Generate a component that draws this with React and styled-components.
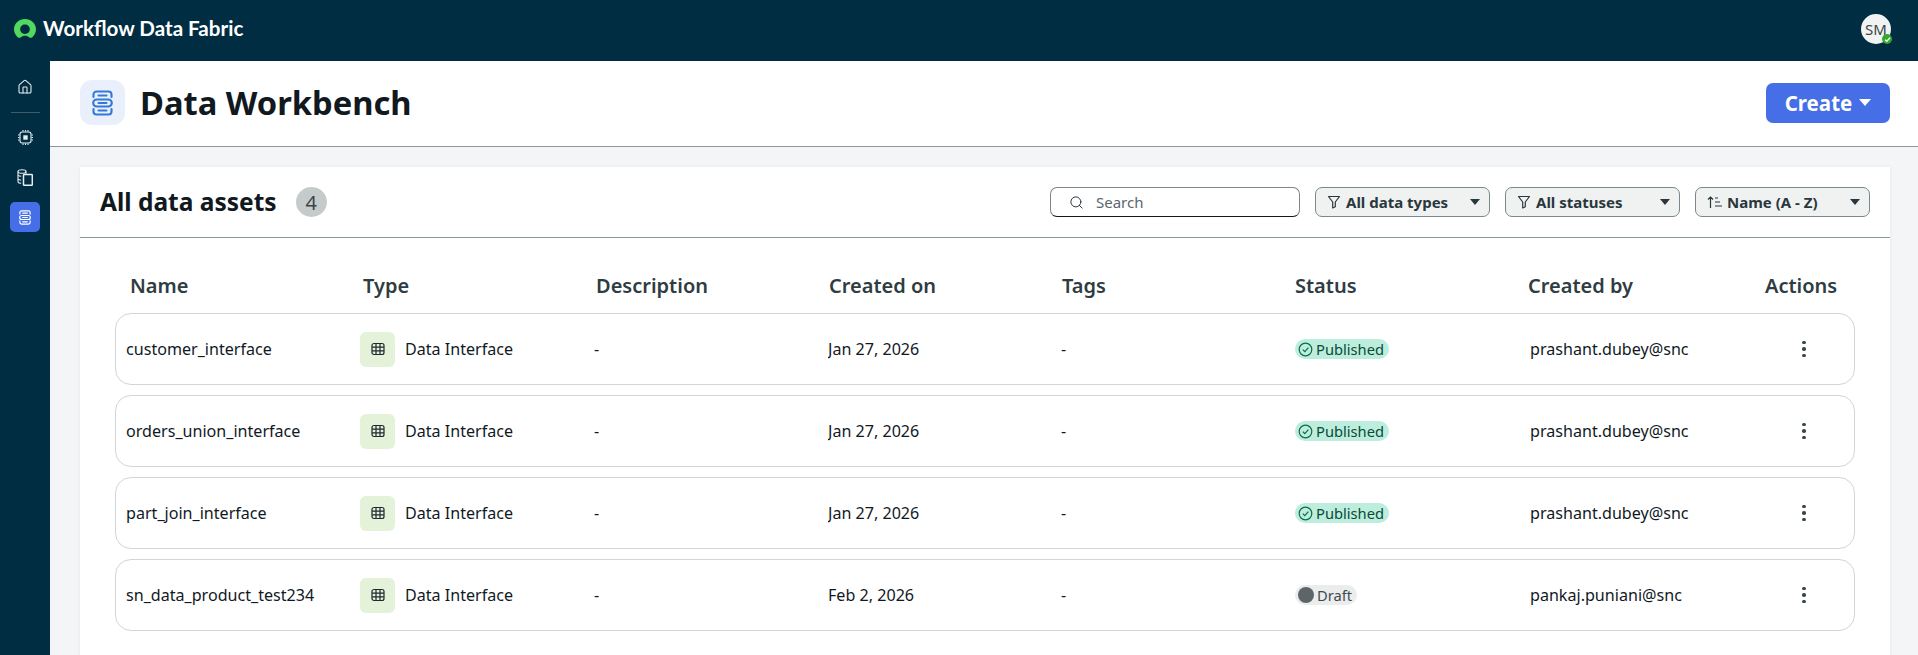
import React from "react";
import styled, { createGlobalStyle } from "styled-components";
import { Search as SearchIcon, Home } from "lucide-react";

const GlobalStyle = createGlobalStyle`
  html, body { margin: 0; padding: 0; height: 100%; }
  body { font-family: "Noto Sans", "Open Sans", sans-serif; color: #11191f; background: #f4f5f7; }
  * { box-sizing: border-box; }
  #root { height: 100%; }
`;

const rows = [
  { name: "customer_interface", date: "Jan 27, 2026", status: "Published", by: "prashant.dubey@snc" },
  { name: "orders_union_interface", date: "Jan 27, 2026", status: "Published", by: "prashant.dubey@snc" },
  { name: "part_join_interface", date: "Jan 27, 2026", status: "Published", by: "prashant.dubey@snc" },
  { name: "sn_data_product_test234", date: "Feb 2, 2026", status: "Draft", by: "pankaj.puniani@snc" },
];

// two brackets with a bar in each, and a full pill in the middle
function DataIcon({ width = 21, height = 26, color = "#3478d8" }) {
  return (
    <svg width={width} height={height} viewBox="0 0 21 26" fill="none" stroke={color} strokeWidth="2.1" strokeLinecap="round">
      <path d="M1.500 7V4.500A3 3 0 0 1 4.500 1.500h12a3 3 0 0 1 3 3V7" />
      <path d="M6.500 5.500h8" />
      <rect x="1.200" y="9.500" width="18.600" height="7" rx="3.500" />
      <path d="M6.500 13h8" />
      <path d="M1.500 19v2.500a3 3 0 0 0 3 3h12a3 3 0 0 0 3-3V19" />
      <path d="M6.500 20.500h8" />
    </svg>
  );
}

function ChipIcon() {
  return (
    <svg width="15" height="15" viewBox="0 0 15 15" fill="none" stroke="#e8eef2" strokeWidth="1.1">
      <rect x="2" y="2" width="11" height="11" rx="2.200" />
      <rect x="5.300" y="5.300" width="4.400" height="4.400" fill="#e8eef2" stroke="none" />
      <path d="M5 0v1.400M7.500 0v1.400M10 0v1.400M5 13.600V15M7.500 13.600V15M10 13.600V15M0 5h1.400M0 7.500h1.400M0 10h1.400M13.600 5H15M13.600 7.500H15M13.600 10H15" />
    </svg>
  );
}

function FilesIcon() {
  return (
    <svg width="16" height="17" viewBox="0 0 16 17" fill="none" stroke="#e8eef2" strokeWidth="1.1">
      <ellipse cx="5" cy="2.500" rx="4" ry="1.800" />
      <path d="M1 2.500v10.200c0 .9 1.100 1.500 3.200 1.600" />
      <path d="M1 6.300c.6.500 1.700.9 3.200 1M1 10.200c.6.500 1.700.9 3.200 1M9 2.500v2.300" />
      <rect x="6.500" y="5.500" width="8.800" height="10.800" rx="0.800" strokeWidth="1.500" />
      <path d="M10.500 5.500v10.800" strokeOpacity="0" />
    </svg>
  );
}

function TableIcon() {
  return (
    <svg width="14" height="14" viewBox="0 0 14 14" fill="none" stroke="#1e2a2f" strokeWidth="1.2">
      <rect x="1" y="1.500" width="12" height="11" rx="2" />
      <path d="M1 5.200h12M1 8.800h12M5 1.500v11M9 1.500v11" />
    </svg>
  );
}

function FilterIcon() {
  return (
    <svg width="14" height="14" viewBox="0 0 14 14" fill="none" stroke="#2a373d" strokeWidth="1.2" strokeLinejoin="round">
      <path d="M1.500 1.500h11L8.300 7v4.800L5.700 13V7z" />
    </svg>
  );
}

function SortIcon() {
  return (
    <svg width="15" height="14" viewBox="0 0 15 14" fill="none" stroke="#2a373d" strokeWidth="1.2">
      <path d="M3.500 13V2M1 4.500 3.500 2 6 4.500M8 3h3M8 7h5M8 11h7" />
    </svg>
  );
}

function CheckCircle() {
  return (
    <svg width="15" height="15" viewBox="0 0 15 15" fill="none" stroke="#0b6b4c" strokeWidth="1.2">
      <circle cx="7.500" cy="7.500" r="6.300" />
      <path d="M4.800 7.700 6.800 9.700 10.400 5.600" />
    </svg>
  );
}

export default function App() {
  return (
    <>
      <GlobalStyle />
      <Shell>
        <TopBar>
          <Brand>
            <svg width="22" height="20" viewBox="0 0 22 20">
              <path
                fillRule="evenodd"
                fill="#52d95f"
                d="M11 0C5 0 0 4.400 0 10.300c0 3.300 1.600 6 3.600 7.900.9.800 2.100.9 3 .2C7.900 17.400 9.300 16.800 11 16.800s3.100.6 4.400 1.600c.9.7 2.100.6 3-.2 2-1.900 3.600-4.600 3.600-7.900C22 4.400 17 0 11 0zm0 15c-2.800 0-4.800-2.100-4.800-4.700S8.200 5.600 11 5.600s4.800 2.100 4.800 4.700S13.800 15 11 15z"
              />
            </svg>
            <BrandName>Workflow Data Fabric</BrandName>
          </Brand>
          <Avatar>
            SM
            <Presence>
              <svg width="7" height="7" viewBox="0 0 7 7" fill="none" stroke="#fff" strokeWidth="1.3">
                <path d="M1 3.700 2.800 5.300 6 1.800" />
              </svg>
            </Presence>
          </Avatar>
        </TopBar>
        <Body>
          <Sidebar>
            <NavItem><Home size={16} color="#e8eef2" strokeWidth={1.6} /></NavItem>
            <NavDivider />
            <NavItem><ChipIcon /></NavItem>
            <NavItem><FilesIcon /></NavItem>
            <NavItem $active><DataIcon width={12} height={15} color="#fff" /></NavItem>
          </Sidebar>
          <Main>
            <PageHeader>
              <TitleGroup>
                <TitleTile><DataIcon /></TitleTile>
                <Title>Data Workbench</Title>
              </TitleGroup>
              <CreateButton>Create<Caret $color="#fff" $size={6} /></CreateButton>
            </PageHeader>
            <Content>
              <Card>
                <CardHeader>
                  <CardTitleGroup>
                    <CardTitle>All data assets</CardTitle>
                    <Count>4</Count>
                  </CardTitleGroup>
                  <Controls>
                    <SearchBox>
                      <SearchIcon size={15} color="#2a373d" strokeWidth={1.6} />
                      <SearchInput placeholder="Search" />
                    </SearchBox>
                    <Select><FilterIcon /><SelectLabel>All data types</SelectLabel><Caret $color="#2a373d" $size={5} /></Select>
                    <Select><FilterIcon /><SelectLabel>All statuses</SelectLabel><Caret $color="#2a373d" $size={5} /></Select>
                    <Select><SortIcon /><SelectLabel>Name (A - Z)</SelectLabel><Caret $color="#2a373d" $size={5} /></Select>
                  </Controls>
                </CardHeader>
                <Table>
                  <HeadRow>
                    <HeadCell>Name</HeadCell>
                    <HeadCell>Type</HeadCell>
                    <HeadCell>Description</HeadCell>
                    <HeadCell>Created on</HeadCell>
                    <HeadCell>Tags</HeadCell>
                    <HeadCell>Status</HeadCell>
                    <HeadCell>Created by</HeadCell>
                    <HeadCell>Actions</HeadCell>
                  </HeadRow>
                  {rows.map((row) => (
                    <Row key={row.name}>
                      <Cell>{row.name}</Cell>
                      <TypeCell>
                        <TypeTile><TableIcon /></TypeTile>
                        Data Interface
                      </TypeCell>
                      <Cell>-</Cell>
                      <Cell>{row.date}</Cell>
                      <Cell>-</Cell>
                      <StatusCell>
                        {row.status === "Published" ? (
                          <Pill $published><CheckCircle />Published</Pill>
                        ) : (
                          <Pill><DraftDot />Draft</Pill>
                        )}
                      </StatusCell>
                      <Cell>{row.by}</Cell>
                      <ActionCell>
                        <Dots><i /><i /><i /></Dots>
                      </ActionCell>
                    </Row>
                  ))}
                </Table>
              </Card>
            </Content>
          </Main>
        </Body>
      </Shell>
    </>
  );
}

const Shell = styled.div`
  height: 100vh;
  display: flex;
  flex-direction: column;
  overflow: hidden;
`;

const TopBar = styled.header`
  height: 61px;
  flex: none;
  background: #012d42;
  display: flex;
  align-items: center;
  justify-content: space-between;
  padding: 0 27px 3px 14px;
`;

const Brand = styled.div`
  display: flex;
  align-items: center;
  gap: 7px;
`;

const BrandName = styled.span`
  font-family: Lato, sans-serif;
  font-weight: 700;
  font-size: 20.6px;
  line-height: 20px;
  margin-top: -3px;
  color: #fff;
`;

const Avatar = styled.div`
  position: relative;
  width: 30px;
  height: 30px;
  border-radius: 50%;
  background: #f1f3f3;
  color: #3a464b;
  font-size: 15px;
  display: flex;
  align-items: center;
  justify-content: center;
`;

const Presence = styled.span`
  position: absolute;
  right: -1px;
  bottom: 0;
  width: 10px;
  height: 10px;
  border-radius: 50%;
  background: #36a82e;
  display: flex;
  align-items: center;
  justify-content: center;
`;

const Body = styled.div`
  flex: 1;
  display: flex;
  min-height: 0;
`;

const Sidebar = styled.nav`
  width: 50px;
  flex: none;
  background: #012d42;
  display: flex;
  flex-direction: column;
  align-items: center;
  padding-top: 11px;
`;

const NavItem = styled.div`
  width: 30px;
  height: 30px;
  margin-bottom: 10px;
  border-radius: 5px;
  display: flex;
  align-items: center;
  justify-content: center;
  background: ${(p) => (p.$active ? "#466ee6" : "transparent")};
`;

const NavDivider = styled.div`
  width: 29px;
  height: 1px;
  background: #3f5c6b;
  margin-bottom: 9px;
`;

const Main = styled.main`
  flex: 1;
  min-width: 0;
  display: flex;
  flex-direction: column;
`;

const PageHeader = styled.div`
  height: 86px;
  flex: none;
  background: #fff;
  border-bottom: 1px solid #8a979e;
  display: flex;
  align-items: center;
  justify-content: space-between;
  padding: 0 28px 2px 30px;
`;

const TitleGroup = styled.div`
  display: flex;
  align-items: center;
  gap: 15px;
`;

const TitleTile = styled.div`
  width: 45px;
  height: 45px;
  border-radius: 12px;
  background: #e9f0fb;
  display: flex;
  align-items: center;
  justify-content: center;
`;

const Title = styled.h1`
  margin: 0;
  font-size: 32.7px;
  font-weight: 700;
  color: #11191f;
`;

const CreateButton = styled.button`
  width: 124px;
  height: 40px;
  border: none;
  border-radius: 7px;
  background: #466ee6;
  color: #fff;
  font-family: inherit;
  font-size: 20.5px;
  font-weight: 700;
  display: flex;
  align-items: center;
  justify-content: center;
  gap: 7px;
`;

const Caret = styled.span`
  width: 0;
  height: 0;
  border-left: ${(p) => p.$size}px solid transparent;
  border-right: ${(p) => p.$size}px solid transparent;
  border-top: ${(p) => p.$size + 1}px solid ${(p) => p.$color};
`;

const Content = styled.div`
  flex: 1;
  min-height: 0;
  padding: 20px 28px 0 30px;
  background: #f4f5f7;
`;

const Card = styled.section`
  background: #fff;
  height: 100%;
  min-height: 500px;
  box-shadow: 0 0 4px rgba(20, 30, 40, 0.06);
`;

const CardHeader = styled.div`
  height: 71px;
  border-bottom: 1px solid #8a979e;
  display: flex;
  align-items: center;
  justify-content: space-between;
  padding: 0 20px;
`;

const CardTitleGroup = styled.div`
  display: flex;
  align-items: center;
  gap: 19px;
`;

const CardTitle = styled.h2`
  margin: -2px 0 0;
  font-size: 24.5px;
  font-weight: 700;
`;

const Count = styled.span`
  width: 31px;
  height: 30px;
  border-radius: 50%;
  background: #c5cacb;
  color: #3a464b;
  font-size: 20px;
  display: flex;
  align-items: center;
  justify-content: center;
`;

const Controls = styled.div`
  display: flex;
  align-items: center;
  gap: 15px;
`;

const SearchBox = styled.div`
  width: 250px;
  height: 30px;
  border: 1px solid #7a878d;
  border-bottom-color: #11191f;
  border-radius: 7px;
  background: #fff;
  display: flex;
  align-items: center;
  gap: 10px;
  padding: 0 18px;
`;

const SearchInput = styled.input`
  flex: 1;
  min-width: 0;
  border: none;
  outline: none;
  background: transparent;
  font-family: inherit;
  font-size: 15px;
  &::placeholder { color: #5a666c; opacity: 1; }
`;

const Select = styled.div`
  width: 175px;
  height: 30px;
  border: 1px solid #7a878d;
  border-radius: 7px;
  background: #f0f2f2;
  display: flex;
  align-items: center;
  gap: 5px;
  padding: 0 9px 0 11px;
`;

const SelectLabel = styled.span`
  flex: 1;
  font-size: 15px;
  font-weight: 700;
  color: #2a373d;
`;

const Table = styled.div`
  padding: 0 35px;
`;

const HeadRow = styled.div`
  display: grid;
  grid-template-columns: 233px 233px 233px 233px 233px 233px 237px 1fr;
  height: 75px;
  align-items: center;
  padding: 19px 0 0 15px;
`;

const HeadCell = styled.div`
  font-size: 20px;
  font-weight: 600;
  color: #2f3c42;
  white-space: nowrap;
`;

const Row = styled.div`
  display: grid;
  grid-template-columns: 234px 234px 234px 233px 234px 235px 234px 1fr;
  height: 72px;
  margin-bottom: 10px;
  align-items: center;
  padding-left: 10px;
  border: 1px solid #d0d6d8;
  border-radius: 16px;
  background: #fff;
`;

const Cell = styled.div`
  font-size: 16.1px;
  color: #11191f;
  white-space: nowrap;
  overflow: hidden;
`;

const TypeCell = styled(Cell)`
  display: flex;
  align-items: center;
  gap: 10px;
`;

const StatusCell = styled.div`
  display: flex;
  align-items: center;
`;

const TypeTile = styled.span`
  width: 35px;
  height: 35px;
  border-radius: 6px;
  background: #e4f2d9;
  display: flex;
  align-items: center;
  justify-content: center;
`;

const Pill = styled.span`
  display: inline-flex;
  align-items: center;
  gap: 3px;
  height: 20px;
  padding: 0 5px 0 3px;
  border-radius: 10px;
  font-size: 14.7px;
  background: ${(p) => (p.$published ? "#bdeedd" : "#ebecec")};
  color: ${(p) => (p.$published ? "#0a4a38" : "#3f4a4f")};
`;

const DraftDot = styled.span`
  width: 16px;
  height: 16px;
  border-radius: 50%;
  background: #5d6568;
`;

const ActionCell = styled.div`
  display: flex;
  justify-content: center;
  padding-right: 10px;
`;

const Dots = styled.div`
  display: flex;
  flex-direction: column;
  gap: 3px;
  i {
    width: 3.5px;
    height: 3.5px;
    border-radius: 50%;
    background: #3a464b;
  }
`;
